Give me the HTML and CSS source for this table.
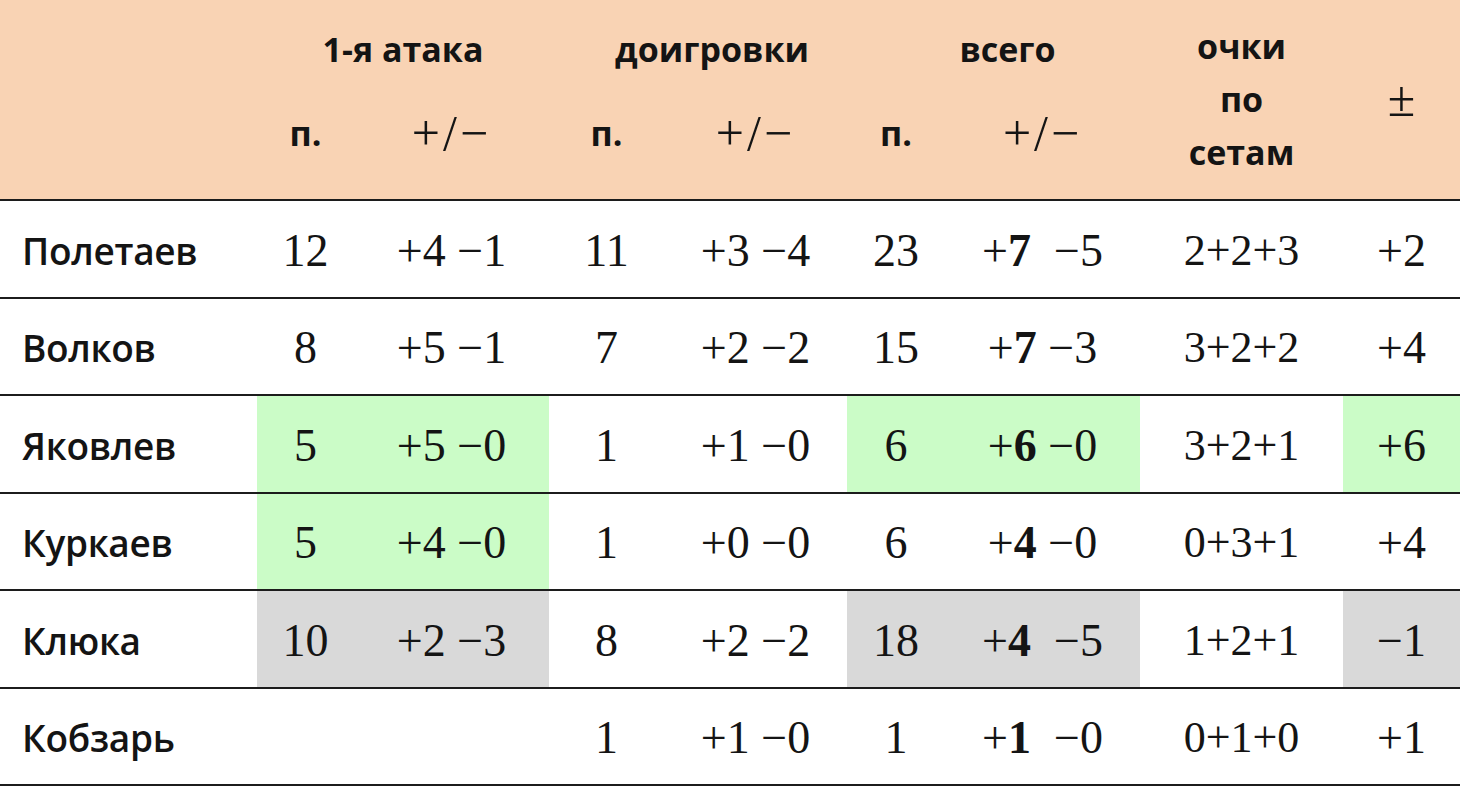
FILE: index.html
```html
<!DOCTYPE html>
<html lang="ru">
<head>
<meta charset="utf-8">
<title>Статистика</title>
<link rel="stylesheet" href="styles.css">
</head>
<body>
<table class="stats">
  <colgroup>
    <col class="c-name">
    <col class="c-p1"><col class="c-pm1">
    <col class="c-p2"><col class="c-pm2">
    <col class="c-p3"><col class="c-pm3">
    <col class="c-sets">
    <col class="c-tot">
  </colgroup>
  <thead>
    <tr class="h1">
      <th rowspan="2"></th>
      <th colspan="2" class="grp">1-я атака</th>
      <th colspan="2" class="grp shift">доигровки</th>
      <th colspan="2" class="grp shift">всего</th>
      <th rowspan="2" class="sets">очки<br>по<br>сетам</th>
      <th rowspan="2" class="pm">±</th>
    </tr>
    <tr class="h2">
      <th class="lbl">п.</th><th class="pmh">+/−</th>
      <th class="lbl">п.</th><th class="pmh">+/−</th>
      <th class="lbl">п.</th><th class="pmh">+/−</th>
    </tr>
  </thead>
  <tbody>
    <tr>
      <td class="name">Полетаев</td>
      <td>12</td><td>+4 −1</td>
      <td>11</td><td>+3 −4</td>
      <td>23</td><td>+<b>7</b>&nbsp; −5</td>
      <td class="sum">2+2+3</td><td>+2</td>
    </tr>
    <tr>
      <td class="name">Волков</td>
      <td>8</td><td>+5 −1</td>
      <td>7</td><td>+2 −2</td>
      <td>15</td><td>+<b>7</b> −3</td>
      <td class="sum">3+2+2</td><td>+4</td>
    </tr>
    <tr>
      <td class="name">Яковлев</td>
      <td class="good">5</td><td class="good">+5 −0</td>
      <td>1</td><td>+1 −0</td>
      <td class="good">6</td><td class="good">+<b>6</b> −0</td>
      <td class="sum">3+2+1</td><td class="good">+6</td>
    </tr>
    <tr>
      <td class="name">Куркаев</td>
      <td class="good">5</td><td class="good">+4 −0</td>
      <td>1</td><td>+0 −0</td>
      <td>6</td><td>+<b>4</b> −0</td>
      <td class="sum">0+3+1</td><td>+4</td>
    </tr>
    <tr>
      <td class="name">Клюка</td>
      <td class="bad">10</td><td class="bad">+2 −3</td>
      <td>8</td><td>+2 −2</td>
      <td class="bad">18</td><td class="bad">+<b>4</b>&nbsp; −5</td>
      <td class="sum">1+2+1</td><td class="bad">−1</td>
    </tr>
    <tr>
      <td class="name">Кобзарь</td>
      <td></td><td></td>
      <td>1</td><td>+1 −0</td>
      <td>1</td><td>+<b>1</b>&nbsp; −0</td>
      <td class="sum">0+1+0</td><td>+1</td>
    </tr>
  </tbody>
</table>
</body>
</html>
```

FILE: styles.css
```css
html, body {
  margin: 0;
  padding: 0;
  background: #ffffff;
}

.stats {
  width: 1460px;
  border-collapse: collapse;
  table-layout: fixed;
  color: #141414;
}

.c-name { width: 257px; }
.c-p1 { width: 97px; }
.c-pm1 { width: 195px; }
.c-p2 { width: 115px; }
.c-pm2 { width: 183px; }
.c-p3 { width: 98px; }
.c-pm3 { width: 195px; }
.c-sets { width: 203px; }
.c-tot { width: 117px; }

.stats thead {
  background: #f9d3b4;
}

.stats th {
  font-family: "Open Sans", "DejaVu Sans", sans-serif;
  font-weight: 700;
  font-size: 34px;
  text-align: center;
  vertical-align: middle;
  padding: 0;
}

.h1 { height: 97px; }
.h2 { height: 103px; }
.h2 th { padding-bottom: 30px; }

.stats thead tr.h2 th,
.stats thead th[rowspan] {
  border-bottom: 2px solid #1c1c1c;
}

.grp.shift { padding-left: 28px; }

.stats th.sets {
  line-height: 53px;
  padding-bottom: 0;
}

.stats th.pm,
.stats th.pmh {
  font-family: "Liberation Serif", "DejaVu Serif", serif;
  font-weight: 400;
  font-size: 50px;
}
.stats th.pmh { letter-spacing: 3px; }
.stats th.pm { padding-bottom: 2px; }

.stats td {
  height: 92.5px;
  border-bottom: 2px solid #1c1c1c;
  font-family: "Liberation Serif", "DejaVu Serif", serif;
  font-size: 46px;
  text-align: center;
  vertical-align: middle;
  padding: 0;
  padding-top: 3px;
  white-space: pre;
}

.stats td b { font-weight: 700; }

.stats td.name {
  text-align: left;
  padding-left: 22px;
  font-family: "Open Sans", "Noto Sans", sans-serif;
  font-weight: 600;
  font-size: 37px;
  letter-spacing: -0.3px;
}

.stats td.sum { font-size: 44px; }

.good { background: #cbfcc7; }
.bad { background: #d9d9d9; }
```
